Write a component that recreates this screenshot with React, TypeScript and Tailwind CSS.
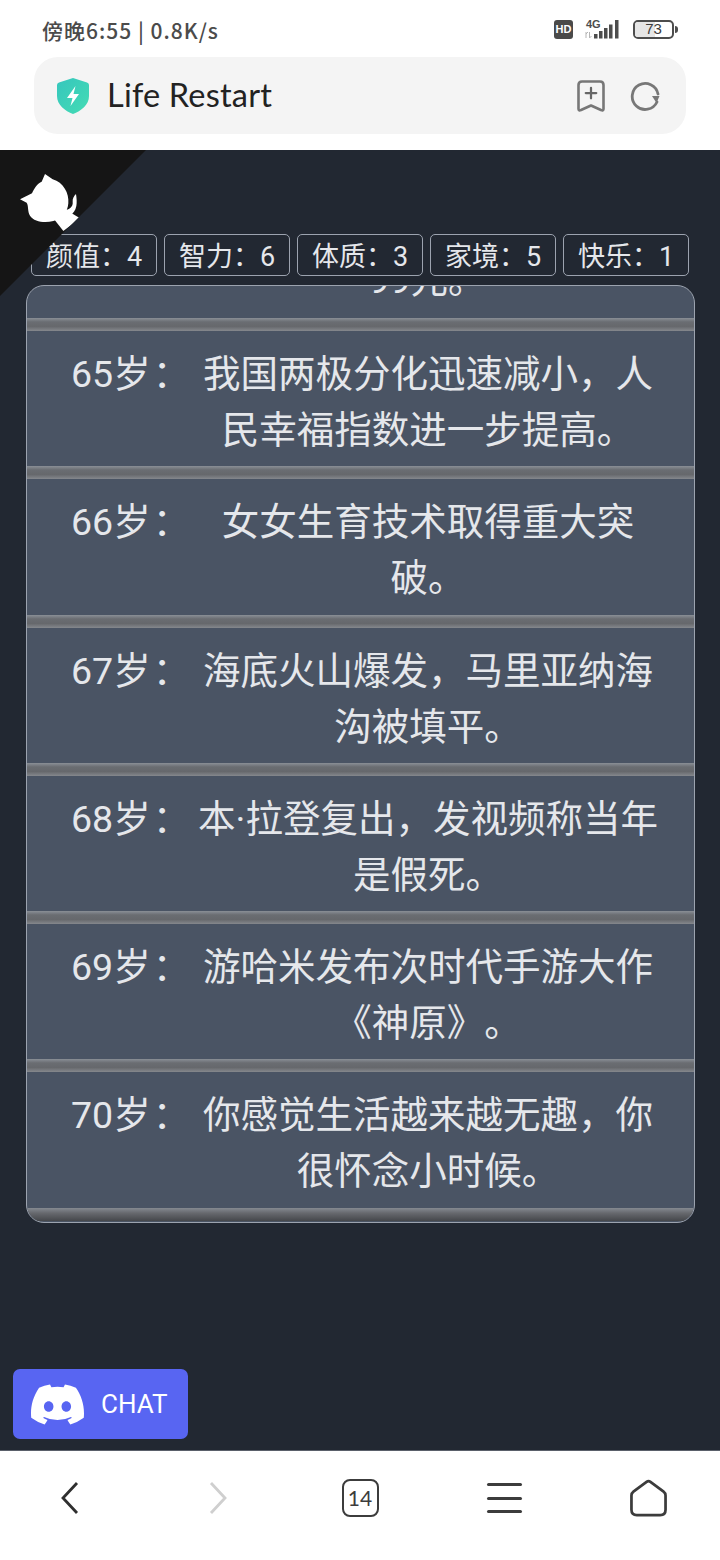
import { Plus } from "lucide-react";

const cjk = "font-['Roboto','Noto_Sans_CJK_SC',sans-serif] [text-spacing-trim:space-all]";

const stats = [
  ["颜值", "4"],
  ["智力", "6"],
  ["体质", "3"],
  ["家境", "5"],
  ["快乐", "1"],
];

const events = [
  ["65", "我国两极分化迅速减小，人民幸福指数进一步提高。"],
  ["66", "女女生育技术取得重大突破。"],
  ["67", "海底火山爆发，马里亚纳海沟被填平。"],
  ["68", "本·拉登复出，发视频称当年是假死。"],
  ["69", "游哈米发布次时代手游大作《神原》。"],
  ["70", "你感觉生活越来越无趣，你很怀念小时候。"],
];

function Divider({ end = false }: { end?: boolean }) {
  return (
    <div
      className={
        end
          ? "h-[13px] shrink-0 bg-[linear-gradient(#858a91,#66686d_40%,#45474b)]"
          : "h-[13px] shrink-0 bg-[linear-gradient(#8a8f96,#6a6d72_30%,#66686c_65%,#85888d)]"
      }
    />
  );
}

function StatusBar() {
  return (
    <div className="flex h-[57px] items-start justify-between pl-[42px] pr-[42px] pt-[16px]">
      <span className="font-['Noto_Sans_CJK_SC',sans-serif] text-[21px] font-medium leading-[28px] tracking-[1px] text-[#4b4b4b]">傍晚6:55 | 0.8K/s</span>
      <div className="flex items-center gap-[12px] pt-[3px]">
        <span className="flex h-[19px] w-[19px] items-center justify-center rounded-[3px] bg-[#4a4a4a] font-['Liberation_Sans',sans-serif] text-[11px] font-bold text-white">
          HD
        </span>
        <svg width="36" height="20" viewBox="0 0 36 20" className="text-[#4d4d4d]">
          <text x="1" y="8.500" fontSize="11" fontWeight="700" fontFamily="Liberation Sans" fill="currentColor">4G</text>
          <path d="M1 13v6M3 13l-2 2M4.500 13v6M4.500 19l2-2" stroke="#b5b5b5" strokeWidth="1" fill="none" />
          <rect x="9" y="15" width="3.500" height="4.500" fill="currentColor" />
          <rect x="14" y="12" width="3.500" height="7.500" fill="currentColor" />
          <rect x="19" y="9" width="3.500" height="10.500" fill="currentColor" />
          <rect x="24" y="5.500" width="3.500" height="14" fill="currentColor" />
          <rect x="30" y="1" width="3.500" height="18.500" fill="currentColor" />
        </svg>
        <div className="flex items-center gap-[1px]">
          <div className="relative h-[19px] w-[41px] overflow-hidden rounded-[5px] border-2 border-[#4d4d4d]">
            <div className="absolute inset-y-0 left-0 w-[55%] bg-[#e6e6e6]" />
            <span className="absolute inset-0 flex items-center justify-center font-['Liberation_Sans',sans-serif] text-[15px] text-[#3c3c3c]">73</span>
          </div>
          <div className="h-[7px] w-[3px] rounded-r-sm bg-[#4d4d4d]" />
        </div>
      </div>
    </div>
  );
}

function AddressBar() {
  return (
    <div className="mx-[34px] flex h-[77px] items-center justify-between rounded-[24px] bg-[#f4f4f4] pl-[22px] pr-[26px]">
      <div className="flex items-center gap-[17px]">
        <svg width="34" height="38" viewBox="0 0 34 38">
          <defs>
            <linearGradient id="shield" x1="0" y1="0" x2="1" y2="1">
              <stop offset="0" stopColor="#35c6bd" />
              <stop offset="1" stopColor="#45dcb4" />
            </linearGradient>
          </defs>
          <path d="M17 1 L31 5.500Q33 6 33 8V19C33 28 25 34 17 37 9 34 1 28 1 19V8Q1 6 3 5.500Z" fill="url(#shield)" />
          <path d="M19.500 9 L11 21h5.500L14.500 29 23 17h-5.500Z" fill="#fff" />
        </svg>
        <span className="font-['Lato',sans-serif] text-[32.500px] leading-none tracking-[0.2px] text-[#222]">Life Restart</span>
      </div>
      <div className="flex items-center gap-[25px]">
        <div className="relative">
          <svg width="28" height="32" viewBox="0 0 28 32" fill="none" stroke="#777" strokeWidth="2.600" strokeLinejoin="round">
            <path d="M5 1.500H23Q26.500 1.500 26.500 5V29Q26.500 31 24 30L14 25.500 4 30Q1.500 31 1.500 29V5Q1.500 1.500 5 1.500Z" />
          </svg>
          <Plus className="absolute left-[5px] top-[4px] text-[#666]" size={18} strokeWidth={3} />
        </div>
        <svg width="30" height="30" viewBox="0 0 30 30" fill="none">
          <path d="M27 21A13 13 0 1 1 28 13" stroke="#777" strokeWidth="2.800" strokeLinecap="round" />
          <path d="M22 15h7.500l-3 7Z" fill="#777" />
        </svg>
      </div>
    </div>
  );
}

function Corner() {
  return (
    <div className="absolute left-0 top-0 h-[146px] w-[146px] bg-[#151515] [clip-path:polygon(0_0,100%_0,0_100%)]">
      <svg width="100" height="100" viewBox="0 0 300 300" className="absolute left-0 top-0" fill="#fff">
        <path d="M60 148 L96 130 C102 115 113 100 125 95 L135 72 L158 88 C190 97 208 130 205 160 C203 188 185 207 160 213 C135 220 102 216 90 197 C82 183 86 166 80 158Z" />
        <path d="M160 205 L195 178 L240 205 L190 243Z" />
        <path d="M192 180 C208 180 220 170 218 155 C217 146 222 138 228 132 C230 145 231 158 229 168 C226 182 220 190 212 194Z" />
      </svg>
    </div>
  );
}

function DiscordIcon() {
  return (
    <svg width="53" height="41" viewBox="0 0 127.140 96.360" fill="#fff">
      <path d="M107.700 8.070A105.150 105.150 0 0 0 81.470 0a72.060 72.060 0 0 0-3.360 6.830 97.680 97.680 0 0 0-29.110 0A72.370 72.370 0 0 0 45.640 0a105.890 105.890 0 0 0-26.250 8.090C2.790 32.650-1.710 56.600.54 80.210a105.730 105.730 0 0 0 32.170 16.150 77.700 77.700 0 0 0 6.890-11.110 68.420 68.420 0 0 1-10.850-5.180c.91-.66 1.800-1.340 2.660-2a75.570 75.570 0 0 0 64.320 0c.87.710 1.760 1.390 2.660 2a68.680 68.680 0 0 1-10.870 5.190 77 77 0 0 0 6.890 11.100 105.250 105.250 0 0 0 32.190-16.140c2.640-27.380-4.510-51.110-18.900-72.150ZM42.450 65.690C36.180 65.690 31 60 31 53s5-12.740 11.430-12.740S54 46 53.890 53s-5.050 12.690-11.440 12.690Zm42.240 0C78.410 65.690 73.250 60 73.250 53s5-12.740 11.440-12.740S96.230 46 96.120 53s-5.040 12.690-11.430 12.690Z" />
    </svg>
  );
}

function BottomNav() {
  return (
    <div className="grid h-[110px] grid-cols-5 items-center justify-items-center border-t border-[#5a606a] bg-white pb-[15px]">
      <svg width="20" height="34" viewBox="0 0 20 34" fill="none" stroke="#2f2f2f" strokeWidth="2.800" className="-translate-x-[2px]">
        <path d="M17 2 3 17 17 32" />
      </svg>
      <svg width="20" height="34" viewBox="0 0 20 34" fill="none" stroke="#cfcfcf" strokeWidth="2.800" className="translate-x-[2px]">
        <path d="M3 2 17 17 3 32" />
      </svg>
      <div className="flex h-[38px] w-[37px] items-center justify-center rounded-[8px] border-[2.500px] border-[#3c3c3c] font-['Lato',sans-serif] text-[21px] text-[#3c3c3c]">
        14
      </div>
      <div className="flex w-[35px] flex-col gap-[10.500px]">
        <div className="h-[3px] rounded-full bg-[#3c3c3c]" />
        <div className="h-[3px] rounded-full bg-[#3c3c3c]" />
        <div className="h-[3px] rounded-full bg-[#3c3c3c]" />
      </div>
      <svg width="37" height="38" viewBox="0 0 38 38" fill="none" stroke="#3c3c3c" strokeWidth="2.800" strokeLinejoin="round">
        <path d="M17 2.500Q19 1 21 2.500L34.500 12.500Q36.500 14 36.500 16.500V31Q36.500 36.500 31 36.500H7Q1.500 36.500 1.500 31V16.500Q1.500 14 3.500 12.500Z" />
      </svg>
    </div>
  );
}

export default function App() {
  return (
    <div className={`flex h-[1560px] w-[720px] flex-col overflow-hidden bg-white ${cjk}`}>
      <div className="h-[150px] shrink-0">
        <StatusBar />
        <AddressBar />
      </div>

      <main className="relative flex flex-1 flex-col bg-[#222832] px-[26px] pt-[84px]">
        <div className="flex h-[42px] w-[658px] justify-between self-center">
          {stats.map(([name, value]) => (
            <div
              key={name}
              className="flex h-[42px] w-[126px] items-center justify-center rounded-[5px] border border-[#9ca3af] pt-[5px] text-[27px] leading-none text-[#e5e7eb]"
            >
              {name}：{value}
            </div>
          ))}
        </div>

        <div className="relative mt-[9px] h-[938px] w-[669px] overflow-hidden rounded-[18px] border border-[#9ca3af] bg-[#4a5464] text-[37.500px] leading-[56px] text-[#e5e7eb]">
          {/* previous year's entry, scrolled almost out of the panel */}
          <div className="h-[32px] overflow-hidden pl-[16px] text-center">
            <p className="-mt-[34px] pl-[117px]">99元。</p>
          </div>
          <Divider />
          {events.map(([age, text], i) => (
            <div key={age}>
              <div className="flex h-[135.300px] items-start pl-[44px] pr-[28px] pt-[15px]">
                <span className="w-[119px] shrink-0 whitespace-nowrap">
                  {age}岁<span className="ml-[2px]">：</span>
                </span>
                <p className="flex-1 text-center">{text}</p>
              </div>
              <Divider end={i === events.length - 1} />
            </div>
          ))}
        </div>

        <Corner />

        <button className="absolute bottom-[11px] left-[13px] flex h-[70px] w-[175px] items-center gap-[17px] rounded-[7px] bg-[#5865f2] pl-[18px] font-['Roboto',sans-serif] text-[26px] text-white">
          <DiscordIcon />
          CHAT
        </button>
      </main>

      <BottomNav />
    </div>
  );
}
